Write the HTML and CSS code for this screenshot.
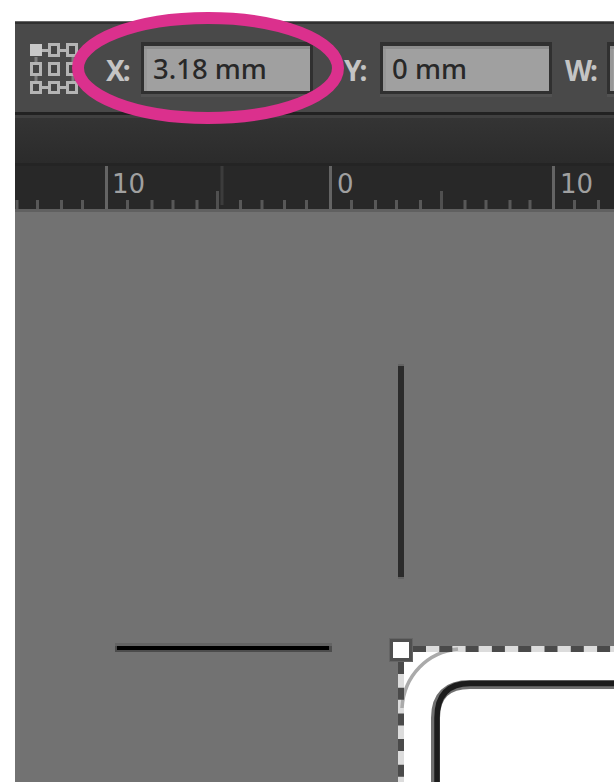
FILE: index.html
```html
<!DOCTYPE html>
<html lang="en">
<head>
    <meta charset="UTF-8">
    <meta name="viewport" content="width=device-width, initial-scale=1.0">
    <title>Artwork Position</title>
    <link rel="stylesheet" href="styles.css">
</head>
<body>
    <div class="app-window">
        <div class="toolbar">
            <svg class="reference-point" width="52" height="54" viewBox="0 0 52 54">
                <path class="links-soft" d="M8 15v5M8 34v5M45 15v5M45 34v5"/>
                <path class="links" d="M13 8.500h7M32 8.500h7M13 45.500h7M32 45.500h7"/>
                <g class="boxes">
                    <rect class="selected" x="3.5" y="3.5" width="9" height="9"/>
                    <rect x="21.5" y="2.5" width="9" height="11"/>
                    <rect x="39.5" y="2.5" width="9" height="11"/>
                    <rect x="3.5" y="21.5" width="9" height="11"/>
                    <rect x="21.5" y="21.5" width="9" height="11"/>
                    <rect x="39.5" y="21.5" width="9" height="11"/>
                    <rect x="3.5" y="40.5" width="9" height="10"/>
                    <rect x="21.5" y="40.5" width="9" height="10"/>
                    <rect x="39.5" y="40.5" width="9" height="10"/>
                </g>
            </svg>
            <span class="label label-x">X:</span>
            <div class="field">3.18 mm</div>
            <span class="label label-y">Y:</span>
            <div class="field">0 mm</div>
            <span class="label label-w">W:</span>
            <div class="field"></div>
        </div>

        <div class="tab-strip"></div>

        <div class="ruler">
            <svg width="599" height="46" viewBox="15 166 599 46">
                <path class="tick" d="M17 200v9M37.500 200v9M61.500 200v9M82.500 200v9M127.500 200v9M152 200v9M173 200v9M197 200v9M240.500 200v9M262 200v9M284.500 200v9M306.500 200v9M351.500 200v9M375.500 200v9M396.500 200v9M420.500 200v9M465 200v9M486 200v9M510 200v9M530 200v9M574.500 200v9M598.500 200v9"/>
                <path class="tick-cursor" d="M222 166v39"/>
                <path class="tick-half" d="M217.500 191v18M441.500 191v18"/>
                <path class="tick-major" d="M106.500 166v43M330.500 166v43M553.500 166v43"/>
                <text x="112" y="193">10</text>
                <text x="337" y="193">0</text>
                <text x="560" y="193">10</text>
            </svg>
        </div>

        <div class="canvas">
            <svg width="599" height="570" viewBox="15 212 599 570">
                <!-- crop marks -->
                <rect class="mark-soft" x="398" y="364" width="6" height="215"/>
                <rect class="mark-dark" x="398" y="366" width="6" height="211"/>
                <rect class="mark-soft" x="115" y="643" width="217" height="3"/>
                <rect class="mark-edge" x="115" y="646" width="217" height="6"/>
                <rect class="mark-black" x="117" y="646" width="212" height="4"/>

                <!-- page and its corner -->
                <rect class="page" x="398" y="646" width="230" height="150"/>
                <path class="page-gap" d="M401 782V649H614"/>
                <path class="bleed" d="M402 708C404 675 428 652 458 649"/>
                <path class="page-edge" d="M413 649H614" stroke-dasharray="13 13.3"/>
                <path class="page-edge" d="M401 662V782" stroke-dasharray="12 13.7"/>
                <path class="inner-soft" d="M435.500 790V718Q435.500 684.500 470 684.500H630"/>
                <path class="inner" d="M437 790V718Q437 683.500 470 683.500H630"/>
                <rect class="handle-shadow" x="389" y="638" width="24" height="24"/>
                <rect class="handle" x="391.500" y="640.500" width="19" height="19"/>
            </svg>
        </div>
    </div>

    <svg class="highlight" width="276" height="116" viewBox="0 0 276 116">
        <ellipse cx="138" cy="58" rx="130" ry="50"/>
    </svg>
</body>
</html>
```
FILE: styles.css
```css
body {
    margin: 0;
    padding: 21px 0 0 15px;
    height: 761px;
    background-color: #fff;
    overflow: hidden;
    font-family: "Noto Sans", sans-serif;
}

.app-window {
    width: 599px;
    height: 761px;
    overflow: hidden;
    background-color: #727272;
}

.toolbar {
    box-sizing: border-box;
    display: flex;
    align-items: flex-start;
    height: 94px;
    padding: 20px 0 0 13px;
    border-top: 1px solid #666;
    border-bottom: 3px solid #222;
    background-color: #494949;
    box-shadow: inset 0 2px #303030;
    overflow: hidden;
}

.reference-point {
    flex: none;
}

.links {
    fill: none;
    stroke: #b4b4b4;
    stroke-width: 3;
}

.links-soft {
    fill: none;
    stroke: #7c7c7c;
    stroke-width: 3;
}

.boxes rect {
    fill: #444;
    stroke: #b4b4b4;
    stroke-width: 3;
}

.boxes .selected {
    fill: #c8c8c8;
    stroke: #c8c8c8;
}

.label {
    flex: none;
    box-sizing: border-box;
    height: 52px;
    line-height: 56px;
    font-size: 28px;
    font-weight: bold;
    letter-spacing: -2px;
    color: #c4c4c4;
    white-space: nowrap;
}

.label-x {
    width: 61px;
    padding-left: 26px;
}

.label-y {
    width: 67px;
    padding-left: 31px;
}

.label-w {
    width: 55px;
    padding-left: 13px;
}

.field {
    flex: none;
    box-sizing: border-box;
    width: 172px;
    height: 52px;
    padding-left: 9px;
    border: 3px solid #303030;
    border-top-width: 4px;
    background-color: #a0a0a0;
    box-shadow: inset 0 3px #8d8d8d, inset 3px 0 #979797, 0 3px #525252;
    font-size: 27.5px;
    font-weight: 500;
    line-height: 46px;
    color: #282828;
    white-space: nowrap;
}

.tab-strip {
    height: 48px;
    border-bottom: 3px solid #242424;
    background: linear-gradient(#404040 3px, #343434 3px, #2b2b2b);
}

.ruler {
    height: 43px;
    border-bottom: 3px solid #606060;
    background-color: #282828;
    overflow: hidden;
}

.ruler svg,
.canvas svg {
    display: block;
}

.ruler path {
    stroke-width: 3;
}

.ruler text {
    font-family: "DejaVu Sans", sans-serif;
    font-size: 26px;
    fill: #a0a0a0;
}

.tick {
    stroke: #585858;
}

.tick-half {
    stroke: #505050;
}

.tick-cursor {
    stroke: #3c3c3c;
}

.tick-major {
    stroke: #646464;
}

.mark-soft {
    fill: #646464;
}

.mark-dark {
    fill: #2b2b2b;
}

.mark-edge {
    fill: #4c4c4c;
}

.mark-black {
    fill: #000;
}

.page {
    fill: #fff;
}

.page-gap {
    fill: none;
    stroke: #dcdcdc;
    stroke-width: 6;
}

.page-edge {
    fill: none;
    stroke: #4a4a4a;
    stroke-width: 6;
}

.bleed {
    fill: none;
    stroke: #aaa;
    stroke-width: 3.5;
}

.inner-soft {
    fill: none;
    stroke: #707070;
    stroke-width: 9;
}

.inner {
    fill: none;
    stroke: #1c1c1c;
    stroke-width: 5.5;
}

.handle-shadow {
    fill: #656565;
}

.handle {
    fill: #fff;
    stroke: #505050;
    stroke-width: 3;
}

/* ring drawn over the X field */
.highlight {
    position: absolute;
    left: 70px;
    top: 10px;
}

.highlight ellipse {
    fill: none;
    stroke: #db308d;
    stroke-width: 12;
}
```
